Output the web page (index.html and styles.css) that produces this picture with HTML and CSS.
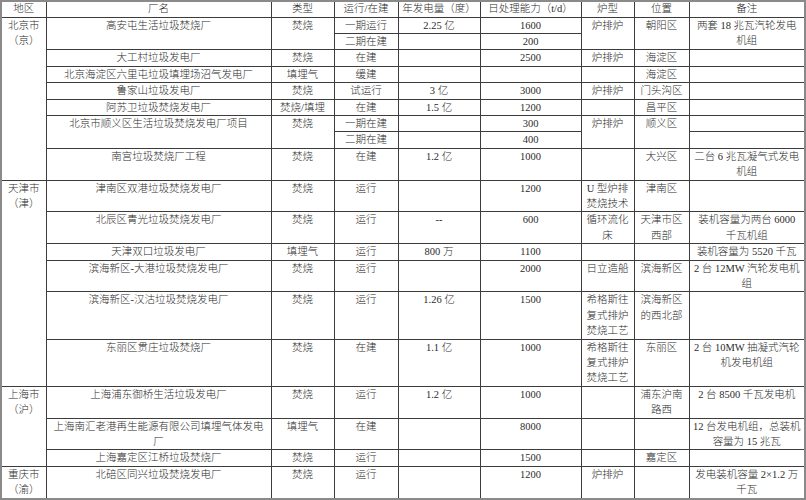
FILE: index.html
```html
<!DOCTYPE html>
<html lang="zh">
<head>
<meta charset="utf-8">
<link rel="stylesheet" href="styles.css">
</head>
<body>
<table class="plants">
<colgroup>
<col class="c1"><col class="c2"><col class="c3"><col class="c4"><col class="c5"><col class="c6"><col class="c7"><col class="c8"><col class="c9">
</colgroup>
<tbody>
<tr class="head"><td>地区</td><td>厂名</td><td>类型</td><td>运行/在建</td><td>年发电量（度）</td><td>日处理能力（t/d）</td><td>炉型</td><td>位置</td><td>备注</td></tr>
<tr><td rowspan="9">北京市<br>（京）</td><td rowspan="2">高安屯生活垃圾焚烧厂</td><td rowspan="2">焚烧</td><td>一期运行</td><td>2.25 亿</td><td>1600</td><td rowspan="2">炉排炉</td><td rowspan="2">朝阳区</td><td rowspan="2">两套 18 兆瓦汽轮发电<br>机组</td></tr>
<tr><td>二期在建</td><td></td><td>200</td></tr>
<tr><td>大工村垃圾发电厂</td><td>焚烧</td><td>在建</td><td></td><td>2500</td><td>炉排炉</td><td>海淀区</td><td></td></tr>
<tr><td>北京海淀区六里屯垃圾填埋场沼气发电厂</td><td>填埋气</td><td>缓建</td><td></td><td></td><td></td><td>海淀区</td><td></td></tr>
<tr><td>鲁家山垃圾发电厂</td><td>焚烧</td><td>试运行</td><td>3 亿</td><td>3000</td><td>炉排炉</td><td>门头沟区</td><td></td></tr>
<tr><td>阿苏卫垃圾焚烧发电厂</td><td>焚烧/填埋</td><td>在建</td><td>1.5 亿</td><td>1200</td><td></td><td>昌平区</td><td></td></tr>
<tr><td rowspan="2">北京市顺义区生活垃圾焚烧发电厂项目</td><td rowspan="2">焚烧</td><td>一期在建</td><td></td><td>300</td><td rowspan="2">炉排炉</td><td rowspan="2">顺义区</td><td></td></tr>
<tr><td>二期在建</td><td></td><td>400</td><td></td></tr>
<tr><td>南宫垃圾焚烧厂工程</td><td>焚烧</td><td>在建</td><td>1.2 亿</td><td>1000</td><td></td><td>大兴区</td><td>二台 6 兆瓦凝气式发电<br>机组</td></tr>
<tr><td rowspan="6">天津市<br>（津）</td><td>津南区双港垃圾焚烧发电厂</td><td>焚烧</td><td>运行</td><td></td><td>1200</td><td>U 型炉排<br>焚烧技术</td><td>津南区</td><td></td></tr>
<tr><td>北辰区青光垃圾焚烧发电厂</td><td>焚烧</td><td>运行</td><td>--</td><td>600</td><td>循环流化<br>床</td><td>天津市区<br>西部</td><td>装机容量为两台 6000<br>千瓦机组</td></tr>
<tr><td>天津双口垃圾发电厂</td><td>填埋气</td><td>运行</td><td>800 万</td><td>1100</td><td></td><td></td><td>装机容量为 5520 千瓦</td></tr>
<tr><td>滨海新区-大港垃圾焚烧发电厂</td><td>焚烧</td><td>运行</td><td></td><td>2000</td><td>日立造船</td><td>滨海新区</td><td>2 台 12MW 汽轮发电机<br>组</td></tr>
<tr><td>滨海新区-汉沽垃圾焚烧发电厂</td><td>焚烧</td><td>运行</td><td>1.26 亿</td><td>1500</td><td>希格斯往<br>复式排炉<br>焚烧工艺</td><td>滨海新区<br>的西北部</td><td></td></tr>
<tr><td>东丽区贯庄垃圾焚烧厂</td><td>焚烧</td><td>在建</td><td>1.1 亿</td><td>1000</td><td>希格斯往<br>复式排炉<br>焚烧工艺</td><td>东丽区</td><td>2 台 10MW 抽凝式汽轮<br>机发电机组</td></tr>
<tr><td rowspan="3">上海市<br>（沪）</td><td>上海浦东御桥生活垃圾发电厂</td><td>焚烧</td><td>运行</td><td>1.2 亿</td><td>1000</td><td></td><td>浦东沪南<br>路西</td><td>2 台 8500 千瓦发电机</td></tr>
<tr><td>上海南汇老港再生能源有限公司填埋气体发电<br>厂</td><td>填埋气</td><td>在建</td><td></td><td>8000</td><td></td><td></td><td>12 台发电机组，总装机<br>容量为 15 兆瓦</td></tr>
<tr><td>上海嘉定区江桥垃圾焚烧厂</td><td>焚烧</td><td>运行</td><td></td><td>1500</td><td></td><td>嘉定区</td><td></td></tr>
<tr><td>重庆市<br>（渝）</td><td>北碚区同兴垃圾焚烧发电厂</td><td>焚烧</td><td>运行</td><td></td><td>1200</td><td>炉排炉</td><td></td><td>发电装机容量 2×1.2 万<br>千瓦</td></tr>
</tbody>
</table>
</body>
</html>
```

FILE: styles.css
```css
html, body {
  margin: 0;
  padding: 0;
  background: #ffffff;
}

.plants {
  border-collapse: collapse;
  table-layout: fixed;
  width: 804px;
  border: 2px solid #8a8a8a;
  font-family: "Liberation Serif", "Noto Sans CJK SC", serif;
  font-size: 10.5px;
  font-weight: 300;
  line-height: 15.4px;
  color: #2c2c2c;
}

.plants td {
  border: 1px solid #3c3c3c;
  padding: 0;
  text-align: center;
  vertical-align: top;
  white-space: nowrap;
  overflow: hidden;
}

.plants .head td {
  line-height: 14.5px;
}

.c1 { width: 45px; }
.c2 { width: 225px; }
.c3 { width: 63px; }
.c4 { width: 64px; }
.c5 { width: 82px; }
.c6 { width: 101px; }
.c7 { width: 53px; }
.c8 { width: 55px; }
.c9 { width: 116px; }
```
